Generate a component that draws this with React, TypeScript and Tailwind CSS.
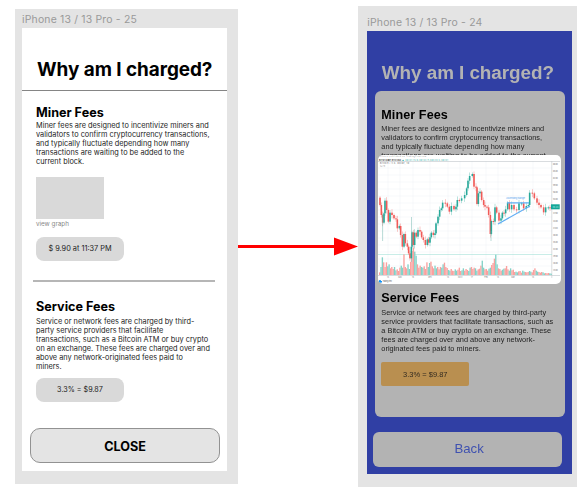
import type { ReactNode } from 'react';

type Point = [number, number];

const prices: Point[] = [
  [27,143],[30,165],[34,195],[38,218],[42,190],[45,152],[50,180],[55,215],[60,188],[66,195],[72,205],[78,208],[82,235],[88,228],[92,255],[97,290],[102,252],[106,280],[112,290],[116,310],[120,325],[124,290],[126,247],[130,285],[134,248],[139,260],[144,240],[150,245],[155,262],[160,270],[166,285],[172,268],[176,278],[180,262],[184,248],[190,255],[195,250],[198,220],[204,200],[209,180],[214,175],[218,158],[226,160],[232,170],[238,185],[244,168],[252,178],[258,170],[262,150],[268,152],[275,145],[284,135],[290,115],[294,92],[299,78],
  [307,72],[312,110],[318,112],[321,162],[325,130],[330,125],[335,150],[341,165],[345,170],[351,172],[356,195],[361,252],[364,213],[370,215],[375,172],[380,188],[387,212],[393,205],[397,188],[402,190],[407,178],[413,158],[418,178],[425,165],[432,178],[440,180],[447,160],[455,160],[461,175],[469,168],[475,165],[479,128],[487,130],[493,145],[501,158],[507,165],[513,172],[521,187],[527,172],[535,172],[540,173],
];

const volumes = [
  8,24,53,38,24,38,26,32,20,24,18,24,14,17,12,22,28,22,62,24,20,32,18,40,72,82,70,58,32,22,28,24,22,26,18,38,24,36,40,26,20,28,20,24,17,24,22,32,37,24,21,15,13,18,13,12,17,13,16,22,12,14,20,13,18,15,12,22,24,18,22,20,13,17,19,28,43,22,17,18,13,19,22,30,36,49,61,32,20,18,13,16,19,20,27,17,13,20,14,16,9,10,8,11,12,7,13,10,9,8,9,12,10,8,15,20,13,10,9,7,9,8,5,6,5,6,5,4,
];

function Chart() {
  return (
    <svg className="block h-[129px] w-[183px]" viewBox="378 155 183 129">
      <g stroke="#eef3f4" strokeWidth=".5">
        {[168, 175, 182, 189, 196, 203, 210, 217, 224, 231, 238, 245, 252, 259, 266].map((y) => (
          <path key={y} d={`M378 ${y}H552`} />
        ))}
        {[388, 400, 413, 430, 448, 460, 472, 486, 498, 513, 533].map((x) => (
          <path key={x} d={`M${x} 161V275`} />
        ))}
      </g>
      <path d="M378 161.5H560M378 275.5H560M551.8 161V278" stroke="#bfc5ca" strokeWidth=".6" />
      <path d="M378 254.5H552" stroke="#a5e0d9" strokeWidth=".6" />
      {volumes.map((v, i) => (
        <rect key={i} x={379 + i * 1.35} y={275 - v / 3} width="1.35" height={v / 3} fill={(i * 7 + Math.floor(i / 5)) % 9 < 5 ? '#faa19f' : '#83d1c7'} />
      ))}
      {prices.slice(1).map(([x, y], i) => {
        const before = prices[i][1];
        const color = y > before ? '#f15b58' : '#28a99a';
        const cx = 370 + x / 3;
        const top = 150 + Math.min(y, before) / 3;
        const height = Math.max(1, Math.abs(y - before) / 3);
        return (
          <g key={x} fill={color}>
            <rect x={cx - 0.25} y={top - 1.5 - (i % 3)} width=".5" height={height + 3 + (i % 3) * 2} opacity=".65" />
            <rect x={cx - 0.8} y={top} width="1.6" height={height} />
          </g>
        );
      })}
      <path d="M382.6 214V241M411.5 217V247M491 231V241" stroke="#73b7af" strokeWidth=".5" />
      <path d="M498 224L530 206M507 202.8H529" stroke="#60aef4" strokeWidth="1.2" />
      <g fontFamily="Inter, sans-serif">
        <text x="506" y="198.7" fontSize="2.7" textLength="19" fill="#69adf0">Ascending triangle</text>
        <text x="380" y="157.4" fontSize="1.5" textLength="46" fill="#777">Bitcoin published on TradingView.com</text>
        <text x="379" y="160.5" fontSize="2" textLength="22" fill="#333" fontWeight="700">BITSTAMP:BTCUSD</text>
        <text x="402" y="160.5" fontSize="1.9" textLength="46" fill="#20a99d">▲ 38241.15 O:38144 H:38320 C:38241</text>
        <text x="380" y="164.2" fontSize="1.9" textLength="29" fill="#555">Bitcoin / U.S. Dollar, 1D</text>
        <text x="380" y="166.9" fontSize="1.7" fill="#888">Vol 20</text>
        {Array.from({ length: 16 }, (_, i) => (
          <text key={i} x="553" y={164.7 + i * 7.1} fontSize="2" textLength="4.8" fill="#777">{`${68 - i * 3}.00`}</text>
        ))}
        {['14', 'Nov', '15', 'Dec', '14', '2022', '17', 'Feb', '14', 'Mar', '14'].map((label, i) => (
          <text key={i} x={[388,400,413,430,448,460,472,486,498,513,533][i]} y="277.8" fontSize="1.9" textAnchor="middle" fill="#777">{label}</text>
        ))}
        <rect x="551" y="204.3" width="8.7" height="5" fill="#13a698" />
        <text x="552.5" y="207.7" fontSize="2.2" fill="#bfeae5">38.24</text>
        <circle cx="380" cy="281.3" r="1.2" fill="#1594f5" />
        <path d="M379 281.7h3" stroke="#1594f5" strokeWidth="1.5" />
        <text x="382.5" y="282.2" fontSize="2" textLength="9.5" fill="#777">TradingView</text>
      </g>
    </svg>
  );
}

function Lines({ children, className }: { children: ReactNode; className: string }) {
  return <div className={`whitespace-pre text-[7.35px] leading-[8.95px] ${className}`}>{children}</div>;
}

export default function App() {
  return (
    <main className="flex h-[500px] w-[587px] items-start overflow-hidden bg-white font-['Inter',sans-serif] text-black">
      <section className="mt-[9px] ml-[15px] h-[475px] w-[223px] shrink-0 bg-[#e4e4e4] pl-[7px]">
        <div className="h-[19px] pt-[3px] text-[10.4px] leading-4 tracking-[0.2px] text-[#999]">iPhone 13 / 13 Pro - 25</div>
        <div className="flex h-[443px] w-[205px] flex-col bg-white">
          <div className="h-[63px] shrink-0 border-b border-[#858585] pt-[29px] pl-[15px] text-[18.9px] leading-[25px] font-bold tracking-[-0.04px] whitespace-nowrap">Why am I charged?</div>
          <div className="h-[189px] shrink-0 pt-[13px] pl-[14px]">
            <h2 className="h-[18px] text-[12.6px] leading-[17px] font-bold">Miner Fees</h2>
            <Lines className="h-[55px] text-[#222]">{'Miner fees are designed to incentivize miners and\nvalidators to confirm cryptocurrency transactions,\nand typically fluctuate depending how many\ntransactions are waiting to be added to the\ncurrent block.'}</Lines>
            <div className="h-[42px] w-[68px] bg-[#d9d9d9]" />
            <div className="h-[18px] pt-px text-[6.3px] leading-[9px] text-[#888]">view graph</div>
            <div className="flex h-[24px] w-[88px] items-center justify-center rounded-[8px] bg-[#d9d9d9] text-[7.35px] text-[#222]">$ 9.90 at 11:37 PM</div>
          </div>
          <div className="ml-[11px] h-[2px] w-[182px] shrink-0 bg-[#b6b6b6]" />
          <div className="h-[146px] shrink-0 pt-[16px] pl-[14px]">
            <h2 className="h-[20px] text-[12.6px] leading-[17px] font-bold">Service Fees</h2>
            <Lines className="h-[60px] text-[#222]">{'Service or network fees are charged by third-\nparty service providers that facilitate\ntransactions, such as a Bitcoin ATM or buy crypto\non an exchange. These fees are charged over and\nabove any network-originated fees paid to\nminers.'}</Lines>
            <div className="flex h-[24px] w-[88px] items-center justify-center rounded-[8px] bg-[#d9d9d9] pt-px text-[7.2px] text-[#222]">3.3% = $9.87</div>
          </div>
          <button className="ml-[8px] h-[35px] w-[190px] shrink-0 rounded-[10px] border border-[#929292] bg-[#e4e4e4] pt-[3px] text-[12.6px] font-bold">CLOSE</button>
        </div>
      </section>

      <svg className="mt-[236px] h-5 w-[120px] shrink-0" viewBox="0 0 120 20" fill="red">
        <path d="M0 9H96V12H0ZM96 1.5L120 10.5L96 19.5Z" />
      </svg>

      <section className="relative mt-[6px] h-[481px] w-[218.5px] shrink-0 bg-[#e4e4e4] pl-[9.3px]">
        <div className="h-[24.5px] pt-[9px] text-[10.4px] leading-4 tracking-[0.2px] text-[#999]">iPhone 13 / 13 Pro - 24</div>
        <div className="h-[443.3px] w-[205px] bg-[#303fa4] font-['Liberation_Sans',sans-serif]">
          <div className="flex h-full w-full flex-col blur-[0.45px]">
            <div className="h-[60.2px] shrink-0 pt-[29.5px] pl-[14.5px] text-[18.9px] leading-[25px] font-bold tracking-[-0.06px] whitespace-nowrap text-[#b3b3b3]">Why am I charged?</div>
            <div className="ml-[7.5px] h-[326px] w-[190px] shrink-0 rounded-[6px] bg-[#b3b3b3] pt-[16.5px] pl-[6.5px]">
              <h2 className="h-[17.5px] text-[12.6px] leading-[17px] font-bold tracking-[0.08px]">Miner Fees</h2>
              <Lines className="h-[165px] tracking-[0.025px] text-[#222]">{'Miner fees are designed to incentivize miners and\nvalidators to confirm cryptocurrency transactions,\nand typically fluctuate depending how many\ntransactions are waiting to be added to the current'}</Lines>
              <h2 className="h-[19px] text-[12.6px] leading-[17px] font-bold tracking-[0.08px]">Service Fees</h2>
              <Lines className="h-[53.5px] tracking-[0.04px] text-[#222]">{'Service or network fees are charged by third-party\nservice providers that facilitate transactions, such as\na Bitcoin ATM or buy crypto on an exchange. These\nfees are charged over and above any network-\noriginated fees paid to miners.'}</Lines>
              <div className="flex h-[24px] w-[88px] items-center justify-center rounded-[2px] bg-[#b98f50] text-[7.5px] text-[#332b20]">3.3% = $9.87</div>
            </div>
            <button className="mt-[15px] ml-[5.8px] h-[35px] w-[189px] shrink-0 rounded-[6px] bg-[#b3b3b3] pl-[3px] text-[13.2px] text-[#3f51b0]">Back</button>
          </div>
        </div>
        <div className="absolute top-[149px] left-[20px] h-[129px] w-[183px] overflow-hidden rounded-[5px] bg-white"><Chart /></div>
      </section>
    </main>
  );
}
